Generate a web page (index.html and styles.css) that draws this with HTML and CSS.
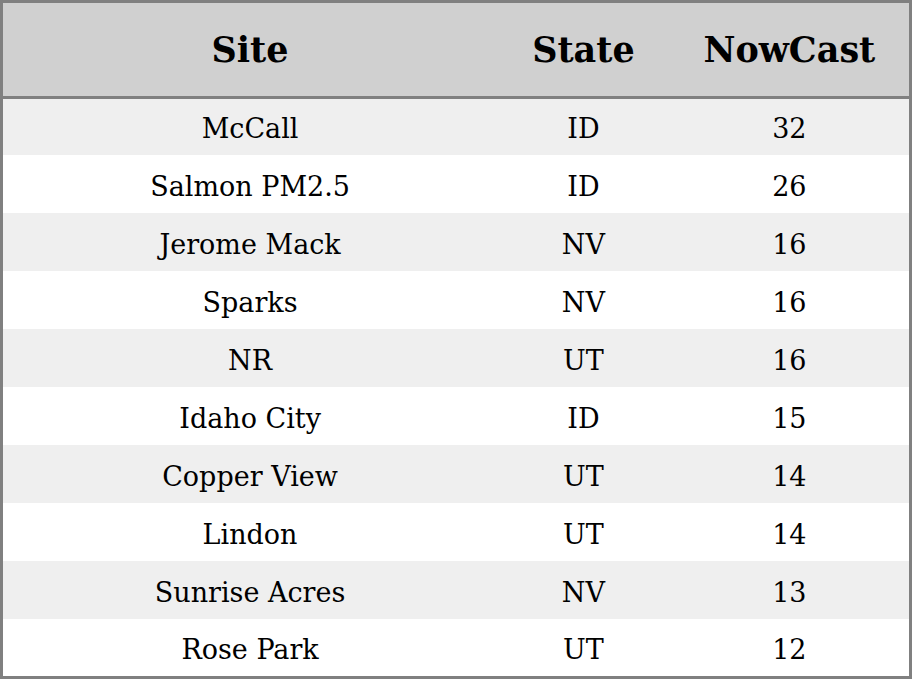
FILE: index.html
```html
<!DOCTYPE html>
<html>
<head>
<meta charset="utf-8">
<link rel="stylesheet" href="styles.css">
</head>
<body>
<table class="aq">
  <colgroup>
    <col class="c-site"><col class="c-state"><col class="c-now">
  </colgroup>
  <thead>
    <tr><th>Site</th><th>State</th><th>NowCast</th></tr>
  </thead>
  <tbody>
    <tr><td>McCall</td><td>ID</td><td>32</td></tr>
    <tr><td>Salmon PM2.5</td><td>ID</td><td>26</td></tr>
    <tr><td>Jerome Mack</td><td>NV</td><td>16</td></tr>
    <tr><td>Sparks</td><td>NV</td><td>16</td></tr>
    <tr><td>NR</td><td>UT</td><td>16</td></tr>
    <tr><td>Idaho City</td><td>ID</td><td>15</td></tr>
    <tr><td>Copper View</td><td>UT</td><td>14</td></tr>
    <tr><td>Lindon</td><td>UT</td><td>14</td></tr>
    <tr><td>Sunrise Acres</td><td>NV</td><td>13</td></tr>
    <tr><td>Rose Park</td><td>UT</td><td>12</td></tr>
  </tbody>
</table>
</body>
</html>
```

FILE: styles.css
```css
html, body {
  margin: 0;
  padding: 0;
  background: #ffffff;
}
.aq {
  width: 912px;
  border-collapse: collapse;
  table-layout: fixed;
  border: 3px solid #808080;
  font-family: "DejaVu Serif", serif;
  color: #000;
}
.c-site { width: 494px; }
.c-state { width: 172px; }
.c-now { width: 240px; }
.aq th {
  height: 93px;
  padding: 0;
  background: #d0d0d0;
  font-size: 35px;
  font-weight: bold;
  text-align: center;
  border-bottom: 3px solid #808080;
}
.aq td {
  height: 52px;
  padding: 6px 0 0;
  font-size: 27px;
  line-height: 32px;
  text-align: center;
}
.aq tbody tr:first-child td { height: 52px; padding-top: 4px; }
.aq tbody tr:last-child td { height: 53px; padding-top: 4px; }
.aq tbody tr:nth-child(odd) { background: #efefef; }
.aq tbody tr:nth-child(even) { background: #ffffff; }
```
